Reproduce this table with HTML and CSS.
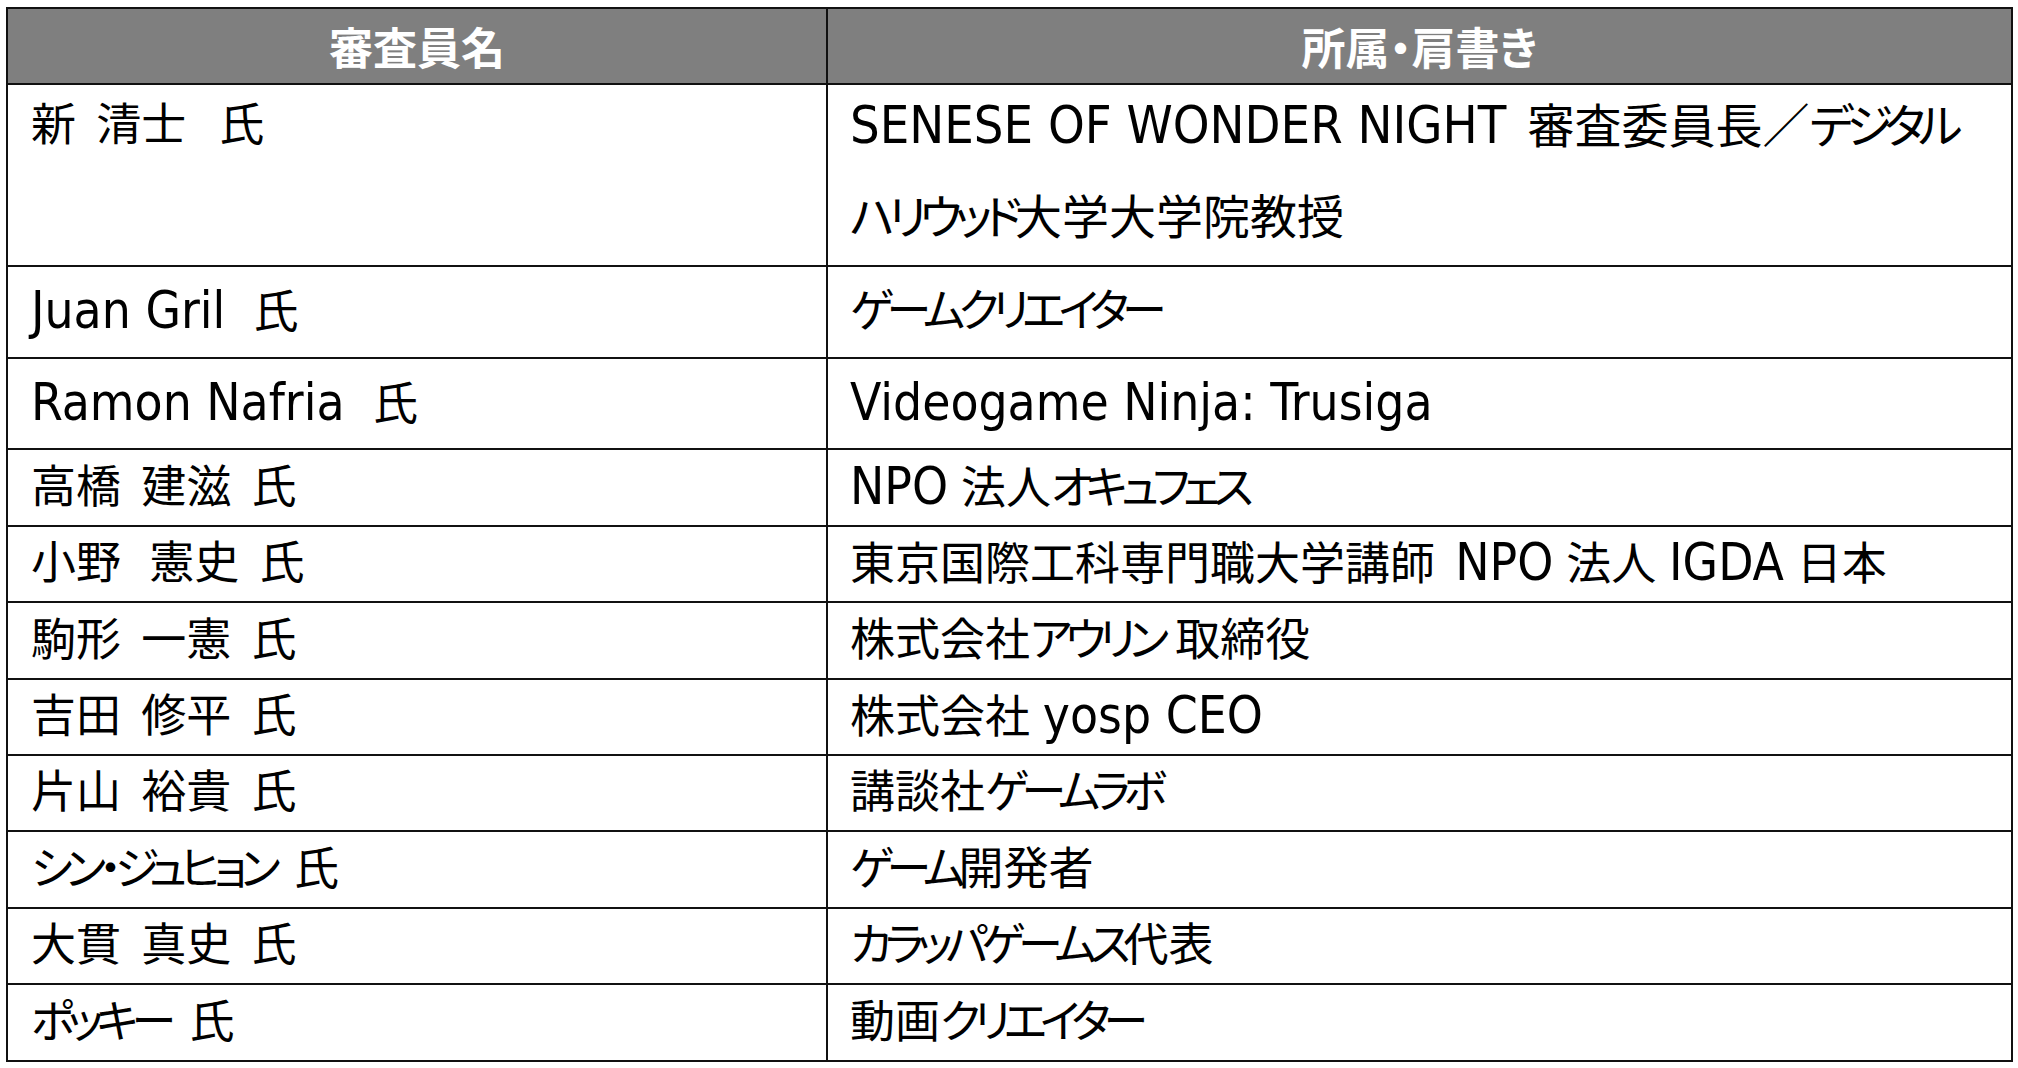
FILE: index.html
```html
<!DOCTYPE html>
<html lang="ja">
<head>
<meta charset="utf-8">
<title>審査員</title>
<link rel="stylesheet" href="styles.css">
</head>
<body>
<div class="judges">
  <div class="cell head"><span class="txt">審査員名</span></div>
  <div class="cell head"><span class="txt">所属・肩書き</span></div>

  <div class="cell name top"><span class="txt">新&ensp;清士&ensp; 氏</span></div>
  <div class="cell role top big"><span class="txt"><span class="en">SENESE OF WONDER NIGHT</span>&ensp;審査委員長／<span class="kana">デジタル</span><br><span class="kana">ハリウッド</span>大学大学院教授</span></div>

  <div class="cell name"><span class="txt"><span class="en">Juan Gril</span>&ensp;&thinsp;氏</span></div>
  <div class="cell role"><span class="txt"><span class="kana">ゲームクリエイター</span></span></div>

  <div class="cell name"><span class="txt"><span class="en">Ramon Nafria</span>&ensp;&thinsp;氏</span></div>
  <div class="cell role"><span class="txt"><span class="en">Videogame Ninja: Trusiga</span></span></div>

  <div class="cell name"><span class="txt">高橋&ensp;建滋&ensp;氏</span></div>
  <div class="cell role"><span class="txt"><span class="en">NPO</span> 法人<span class="kana">オキュフェス</span></span></div>

  <div class="cell name"><span class="txt">小野&ensp;&thinsp;憲史&ensp;氏</span></div>
  <div class="cell role"><span class="txt">東京国際工科専門職大学講師&ensp;<span class="en">NPO</span> 法人 <span class="en">IGDA</span> 日本</span></div>

  <div class="cell name"><span class="txt">駒形&ensp;一憲&ensp;氏</span></div>
  <div class="cell role"><span class="txt">株式会社<span class="kana">アウリン</span> 取締役</span></div>

  <div class="cell name"><span class="txt">吉田&ensp;修平&ensp;氏</span></div>
  <div class="cell role"><span class="txt">株式会社 <span class="en">yosp CEO</span></span></div>

  <div class="cell name"><span class="txt">片山&ensp;裕貴&ensp;氏</span></div>
  <div class="cell role"><span class="txt">講談社<span class="kana">ゲームラボ</span></span></div>

  <div class="cell name"><span class="txt"><span class="kana">シン・ジュヒョン</span>&ensp;氏</span></div>
  <div class="cell role"><span class="txt"><span class="kana">ゲーム</span>開発者</span></div>

  <div class="cell name"><span class="txt">大貫&ensp;真史&ensp;氏</span></div>
  <div class="cell role"><span class="txt"><span class="kana">カラッパゲームス</span>代表</span></div>

  <div class="cell name"><span class="txt"><span class="kana">ポッキー</span>&ensp;氏</span></div>
  <div class="cell role"><span class="txt">動画<span class="kana">クリエイター</span></span></div>
</div>
</body>
</html>
```
FILE: styles.css
```css
html, body {
  margin: 0;
  padding: 0;
  background: #ffffff;
}

body {
  padding: 7px 0 0 6px;
  font-family: "DejaVu Sans Condensed", "DejaVu Sans", "Noto Sans CJK JP", sans-serif;
  font-stretch: condensed;
  color: #000000;
}

.judges {
  display: grid;
  grid-template-columns: 820px 1185px;
  grid-template-rows: 76px 182px 92px 91px 77px 76px 77px 76px 76px 77px 76px 77px;
  width: 2007px;
  box-sizing: border-box;
  border-top: 2px solid #111111;
  border-left: 2px solid #111111;
}

.cell {
  box-sizing: border-box;
  border-right: 2px solid #111111;
  border-bottom: 2px solid #111111;
  display: flex;
  align-items: center;
  font-size: 45px;
  line-height: 60px;
  white-space: nowrap;
}

.head {
  background: #7f7f7f;
  color: #ffffff;
  justify-content: center;
  font-family: "Noto Sans CJK JP", sans-serif;
  font-feature-settings: "palt";
  font-weight: 700;
  font-size: 44px;
}

.name {
  padding-left: 23px;
}

.role {
  padding-left: 22px;
}

.top {
  align-items: flex-start;
}

.top .txt {
  display: block;
  line-height: 91px;
  margin-top: -5px;
}

.big {
  font-size: 47px;
}

.en {
  font-size: 51px;
}

.big .en {
  font-size: 52px;
}

.kana {
  font-feature-settings: "palt";
  letter-spacing: -0.15em;
}
```
